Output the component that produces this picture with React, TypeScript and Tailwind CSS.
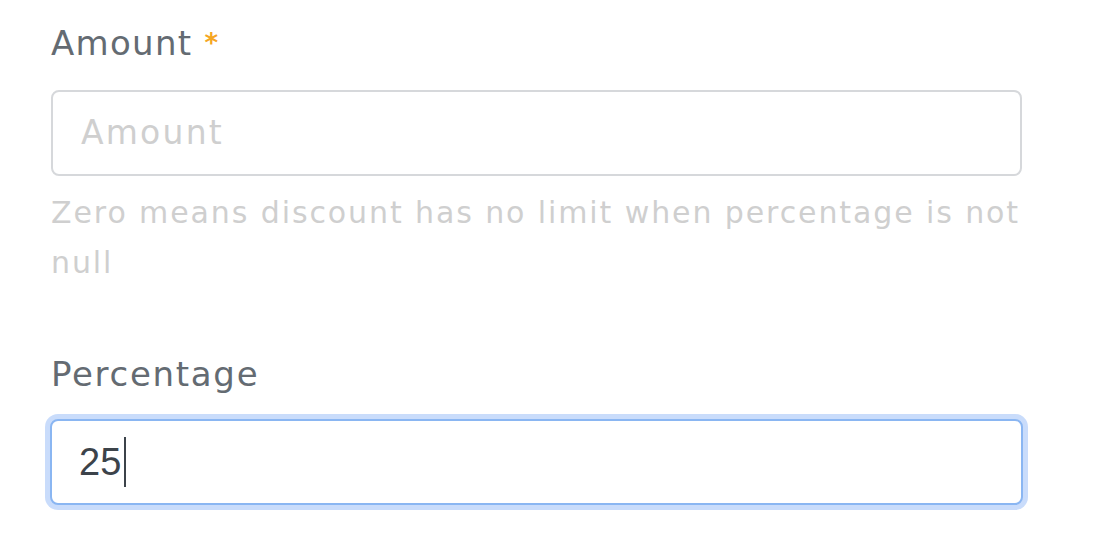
export default function App() {
    const font = { fontFamily: '"DejaVu Sans", "Noto Sans", sans-serif' }
    return (
        <div className="w-[1106px] h-[556px] bg-white pl-[51px] pr-[84px] pt-[20px]" style={font}>
            <label className="flex items-center gap-[12px] text-[34px] tracking-[1.3px] leading-[46px] text-[#646b72]">
                Amount <span className="text-[#f5a623] text-[26px] font-bold">*</span>
            </label>
            <div className="mt-[24px] h-[86px] rounded-[8px] border-2 border-[#d6d8db] flex items-center px-[28px]">
                <span className="text-[33px] tracking-[2.2px] text-[#cfcfcf]">Amount</span>
            </div>
            <p className="mt-[12px] text-[30px] tracking-[1.9px] leading-[50px] text-[#cfcfcf]">
                Zero means discount has no limit when percentage is not null
            </p>
            <label className="block mt-[63px] text-[34px] tracking-[1.7px] leading-[46px] text-[#646b72]">Percentage</label>
            <div className="mt-[17px] -mx-[6px] rounded-[13px] p-[5px] bg-[#c9dcfb]">
                <div className="h-[86px] rounded-[8px] border-2 border-[#8ab6f2] bg-white flex items-center px-[27px]">
                    <span className="text-[38px] text-[#3c434a]" style={{ fontFamily: '"Liberation Sans", Arial, sans-serif' }}>25</span>
                    <span className="ml-[3px] w-[2px] h-[50px] bg-[#3c434a]" />
                </div>
            </div>
        </div>
    )
}
